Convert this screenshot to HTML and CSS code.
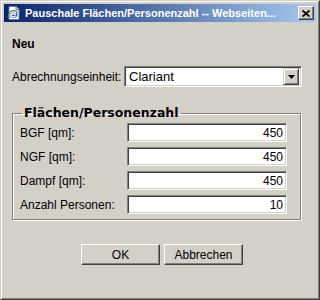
FILE: index.html
```html
<!DOCTYPE html>
<html lang="de">
<head>
    <meta charset="UTF-8">
    <title>Pauschale Flächen/Personenzahl</title>
    <link rel="stylesheet" href="styles.css">
</head>
<body>
    <div class="window">
        <div class="frame">
            <div class="titlebar">
                <svg class="app-icon" width="16" height="16" viewBox="0 0 16 16">
                    <path d="M3 1.5h7l3 3v10H3z" fill="#fff" stroke="#6a7c9a"/>
                    <path d="M10 1.5v3h3" fill="#dfe6f0" stroke="#6a7c9a"/>
                    <circle cx="7.5" cy="9" r="4" fill="#2a63c8"/>
                    <path d="M5.2 9h4.6M9.6 10.6a2.6 2.6 0 1 1 0.2-2" fill="none" stroke="#fff" stroke-width="1.3"/>
                    <path d="M2 11.5c2-3 8-6.5 11.5-6" fill="none" stroke="#f0c020" stroke-width="1"/>
                </svg>
                <span class="title">Pauschale Flächen/Personenzahl -- Webseiten...</span>
                <button class="close-btn" aria-label="Schließen">
                    <svg width="8" height="7" viewBox="0 0 8 7">
                        <path d="M0.5 0.5l7 6M7.5 0.5l-7 6" stroke="#000" stroke-width="1.8"/>
                    </svg>
                </button>
            </div>

            <div class="content">
                <div class="heading">Neu</div>

                <div class="unit-row">
                    <label class="unit-label">Abrechnungseinheit:</label>
                    <div class="combo">
                        <span class="combo-value">Clariant</span>
                        <span class="combo-btn">
                            <svg width="7" height="4" viewBox="0 0 7 4"><path d="M0 0h7L3.5 4z" fill="#000"/></svg>
                        </span>
                    </div>
                </div>

                <fieldset class="group">
                    <legend>Flächen/Personenzahl</legend>
                    <div class="field">
                        <label>BGF [qm]:</label>
                        <input type="text" value="450">
                    </div>
                    <div class="field">
                        <label>NGF [qm]:</label>
                        <input type="text" value="450">
                    </div>
                    <div class="field">
                        <label>Dampf [qm]:</label>
                        <input type="text" value="450">
                    </div>
                    <div class="field">
                        <label>Anzahl Personen:</label>
                        <input type="text" value="10">
                    </div>
                </fieldset>

                <div class="actions">
                    <button class="btn">OK</button>
                    <button class="btn">Abbrechen</button>
                </div>
            </div>
        </div>
    </div>
</body>
</html>
```

FILE: styles.css
```css
:root {
    --face: #d4d0c8;
    --shadow: #808080;
    --dark: #404040;
    --light: #ffffff;
}
* {
    box-sizing: border-box;
}
body {
    margin: 0;
    background: var(--face);
    font-family: 'Liberation Sans', Arial, sans-serif;
    font-size: 12px;
    color: #000;
}
.window {
    width: 320px;
    height: 300px;
    border: 1px solid;
    border-color: var(--face) var(--dark) var(--dark) var(--face);
}
.frame {
    height: 100%;
    border: 1px solid;
    border-color: var(--light) var(--shadow) var(--shadow) var(--light);
    padding: 2px;
}
.titlebar {
    height: 18px;
    display: flex;
    align-items: center;
    padding: 0 2px 0 2px;
    background: linear-gradient(to right, #0a246a, #a6caf0);
}
.app-icon {
    flex: none;
}
.title {
    flex: 1;
    margin-left: 3px;
    color: #fff;
    font-weight: bold;
    font-size: 11px;
    white-space: nowrap;
    overflow: hidden;
}
.close-btn {
    flex: none;
    width: 16px;
    height: 14px;
    padding: 0;
    display: flex;
    align-items: center;
    justify-content: center;
    background: var(--face);
    border: 1px solid;
    border-color: var(--light) var(--dark) var(--dark) var(--light);
    box-shadow: inset -1px -1px 0 var(--shadow);
}
.content {
    padding: 0 8px;
}
.heading {
    margin-top: 15px;
    font-weight: bold;
    line-height: 14px;
}
.unit-row {
    margin-top: 15px;
    display: flex;
    align-items: center;
}
.unit-label {
    width: 112px;
}
.combo {
    width: 178px;
    height: 21px;
    display: flex;
    align-items: center;
    background: #fff;
    border: 1px solid;
    border-color: var(--shadow) var(--light) var(--light) var(--shadow);
    box-shadow: inset 1px 1px 0 var(--dark), inset -1px -1px 0 var(--face);
    padding: 2px;
}
.combo-value {
    flex: 1;
    padding-left: 2px;
    font-size: 13px;
}
.combo-btn {
    width: 16px;
    height: 17px;
    display: flex;
    align-items: center;
    justify-content: center;
    background: var(--face);
    border: 1px solid;
    border-color: var(--face) var(--dark) var(--dark) var(--face);
    box-shadow: inset 1px 1px 0 var(--light), inset -1px -1px 0 var(--shadow);
}
.group {
    width: 289px;
    margin: 18px 0 0 0;
    padding: 2px 7px 5px 7px;
    border: 1px solid var(--shadow);
    box-shadow: inset 1px 1px 0 var(--light), 1px 1px 0 var(--light);
}
.group legend {
    margin-left: 2px;
    padding: 0 2px;
    font-family: 'DejaVu Sans', Verdana, sans-serif;
    font-weight: bold;
    font-size: 12.5px;
    line-height: 16px;
}
.field {
    display: flex;
    align-items: center;
}
.field + .field {
    margin-top: 5px;
}
.field label {
    width: 107px;
}
.field input {
    width: 160px;
    height: 19px;
    margin: 0;
    padding: 0 3px 0 2px;
    text-align: right;
    font-family: 'Liberation Sans', Arial, sans-serif;
    font-size: 12px;
    background: #fff;
    border: 1px solid;
    border-color: var(--shadow) var(--light) var(--light) var(--shadow);
    box-shadow: inset 1px 1px 0 var(--dark), inset -1px -1px 0 var(--face);
    outline: none;
}
.actions {
    margin-top: 24px;
    padding-left: 4px;
    display: flex;
    justify-content: center;
    gap: 4px;
}
.btn {
    width: 79px;
    height: 21px;
    padding: 0;
    background: var(--face);
    font-family: 'Liberation Sans', Arial, sans-serif;
    font-size: 12px;
    color: #000;
    border: 1px solid;
    border-color: var(--light) var(--dark) var(--dark) var(--light);
    box-shadow: inset -1px -1px 0 var(--shadow);
}
```
